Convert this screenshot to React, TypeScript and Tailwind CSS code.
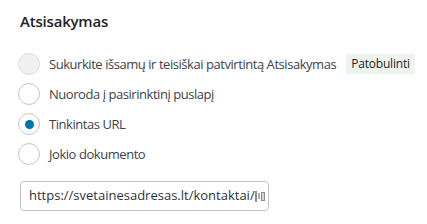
import React from "react";

function Radio({ state }: { state: "disabled" | "off" | "on" }) {
  const base = "w-[22px] h-[22px] rounded-full border flex items-center justify-center shrink-0";
  if (state === "disabled") return <span className={`${base} bg-[#f0f0f1] border-[#dcdcde]`} />;
  return (
    <span className={`${base} bg-white border-[#c3c4c7]`}>
      {state === "on" && <span className="w-[9px] h-[9px] rounded-full bg-[#0073aa]" />}
    </span>
  );
}

export default function App() {
  const rows: { label: string; state: "disabled" | "off" | "on"; badge?: boolean }[] = [
    { label: "Sukurkite išsamų ir teisiškai patvirtintą Atsisakymas", state: "disabled", badge: true },
    { label: "Nuoroda į pasirinktinį puslapį", state: "off" },
    { label: "Tinkintas URL", state: "on" },
    { label: "Jokio dokumento", state: "off" },
  ];
  return (
    <div className="w-[427px] h-[224px] bg-white px-[20px] pt-[10px] text-[#3c434a]" style={{ fontFamily: '"Open Sans", "Noto Sans", sans-serif' }}>
      <div className="text-[15px] font-semibold text-[#1d2327] h-[22px] leading-[22px] tracking-[-0.2px]">Atsisakymas</div>
      <div className="mt-[21px] flex flex-col gap-[8px]">
        {rows.map((r) => (
          <div key={r.label} className="flex items-center h-[22px] gap-[9px] -ml-[2px]">
            <Radio state={r.state} />
            <span className="text-[13px] leading-[22px] whitespace-nowrap tracking-[-0.45px]">{r.label}</span>
            {r.badge && (
              <span className="ml-[1px] bg-[#edf3ed] text-[#1d2327] text-[12px] h-[20px] leading-[20px] px-[5px] whitespace-nowrap tracking-[-0.2px]">Patobulinti</span>
            )}
          </div>
        ))}
      </div>
      <div className="mt-[16px] w-[249px] h-[30px] border border-[#c3c4c7] rounded-[4px] flex items-center pl-[8px] pr-[3px] text-[#2c3338]">
        <span className="text-[13px] tracking-[0px] whitespace-nowrap overflow-hidden flex-1">https://svetainesadresas.lt/kontaktai/</span>
        <span className="flex items-center gap-[1px] shrink-0">
          <span className="w-[2px] h-[11px] bg-[#8c8f94]" />
          <span className="w-[2px] h-[6px] bg-[#b0b0b0]" />
          <span className="w-[4px] h-[9px] border border-[#8c8f94] bg-[#d4d4d4]" />
        </span>
      </div>
    </div>
  );
}
